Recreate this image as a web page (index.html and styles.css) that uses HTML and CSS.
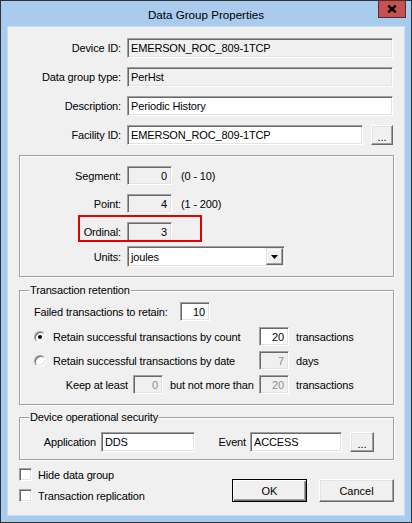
FILE: index.html
```html
<!DOCTYPE html>
<html>
<head>
<meta charset="utf-8">
<title>Data Group Properties</title>
<link rel="stylesheet" href="styles.css">
</head>
<body>
<div class="window">
  <div class="titlebar">
    <span></span>
    <span class="title">Data Group Properties</span>
    <div class="close-wrap">
      <button class="close" aria-label="Close">
        <svg width="10" height="8" viewBox="0 0 10 8"><path d="M1.2 0.6 L8.8 7.4 M8.8 0.6 L1.2 7.4" stroke="#000" stroke-width="2.4" fill="none"/></svg>
      </button>
    </div>
  </div>
  <div class="client">
    <div class="row top"><span class="lbl">Device ID:</span><div class="box ro wide">EMERSON_ROC_809-1TCP</div></div>
    <div class="row top"><span class="lbl">Data group type:</span><div class="box ro wide">PerHst</div></div>
    <div class="row top"><span class="lbl">Description:</span><div class="box wide">Periodic History</div></div>
    <div class="row top last"><span class="lbl">Facility ID:</span><div class="box facility">EMERSON_ROC_809-1TCP</div><button class="btn dots">...</button></div>

    <div class="group g1">
      <div class="row num"><span class="lbl2">Segment:</span><div class="box ro small">0</div><span class="range">(0 - 10)</span></div>
      <div class="row num"><span class="lbl2">Point:</span><div class="box ro small">4</div><span class="range">(1 - 200)</span></div>
      <div class="row num ord"><span class="lbl2">Ordinal:</span><div class="box ro small">3</div></div>
      <div class="row units"><span class="lbl2">Units:</span><div class="box combo"><span>joules</span><span class="combo-btn"><svg width="7" height="4" viewBox="0 0 7 4"><path d="M0 0 H7 L3.5 4 Z" fill="#000"/></svg></span></div></div>
      <div class="highlight"></div>
    </div>

    <div class="group g2">
      <div class="legend">Transaction retention</div>
      <div class="row r2 failed"><span class="lbl-failed">Failed transactions to retain:</span><div class="box num-box">10</div></div>
      <div class="row r2 radio-row"><span class="radio on"></span><span class="lbl-radio">Retain successful transactions by count</span><div class="box num-box">20</div><span class="unit">transactions</span></div>
      <div class="row r2 radio-row"><span class="radio"></span><span class="lbl-radio">Retain successful transactions by date</span><div class="box ro num-box dis">7</div><span class="unit">days</span></div>
      <div class="row r2 keep"><span class="lbl-keep">Keep at least</span><div class="box ro num-box dis">0</div><span class="lbl-more">but not more than</span><div class="box ro num-box dis">20</div><span class="unit">transactions</span></div>
    </div>

    <div class="group g3">
      <div class="legend">Device operational security</div>
      <div class="row sec"><span class="lbl-app">Application</span><div class="box app">DDS</div><span class="lbl-event">Event</span><div class="box event">ACCESS</div><button class="btn dots small-dots">...</button></div>
    </div>

    <div class="bottom">
      <div class="checks">
        <div class="check-row"><span class="checkbox"></span><span class="check-lbl">Hide data group</span></div>
        <div class="check-row second"><span class="checkbox"></span><span class="check-lbl">Transaction replication</span></div>
      </div>
      <div class="buttons">
        <button class="btn default">OK</button>
        <button class="btn">Cancel</button>
      </div>
    </div>
  </div>
</div>
</body>
</html>
```
FILE: styles.css
```css
* { box-sizing: border-box; }
html, body { margin: 0; padding: 0; }
body {
  width: 412px;
  height: 523px;
  overflow: hidden;
  font-family: "Liberation Sans", Arial, sans-serif;
  font-size: 11px;
  letter-spacing: -0.15px;
  color: #000;
  background: #fff;
}
.window {
  width: 412px;
  height: 523px;
  border: 1px solid #2e3136;
  background: #a9cbee;
  display: flex;
  flex-direction: column;
}
.titlebar {
  height: 25px;
  flex: none;
  display: grid;
  grid-template-columns: 1fr auto 1fr;
  align-items: center;
}
.title {
  font-family: "Liberation Sans", Arial, sans-serif;
  font-size: 11.6px;
  letter-spacing: 0;
  color: #000;
  padding-top: 1px;
}
.close-wrap {
  justify-self: end;
  align-self: start;
  margin-top: -1px;
  margin-right: 5px;
}
.close {
  width: 28px;
  height: 18px;
  padding: 0;
  background: #c75050;
  border: 1px solid #4a3030;
  display: flex;
  align-items: center;
  justify-content: center;
}
.client {
  margin: 0 6px;
  height: 490px;
  flex: none;
  border: 1px solid #c9ddf3;
  background: #f0f0f0;
  padding: 11px 10px 0 11px;
}
.row { display: flex; align-items: center; white-space: nowrap; }
.row.top { height: 20px; margin-bottom: 9px; }
.row.top.last { margin-bottom: 10px; }
.lbl { width: 102px; text-align: right; margin-right: 6px; }

.box {
  height: 100%;
  border: 1px solid;
  border-color: #a0a0a0 #fff #fff #a0a0a0;
  box-shadow: inset 1px 1px 0 #696969, inset -1px -1px 0 #e3e3e3;
  background: #fff;
  padding: 0 3px;
  display: flex;
  align-items: center;
  white-space: nowrap;
  overflow: hidden;
}
.box.ro { background: #f0f0f0; }
.box.dis { color: #8d8d8d; }
.box.wide { width: 266px; }
.box.facility { width: 236px; }

.btn {
  background: #f0f0f0;
  border: 1px solid;
  border-color: #fff #696969 #696969 #fff;
  box-shadow: inset -1px -1px 0 #a0a0a0, inset 1px 1px 0 #e3e3e3;
  font: inherit;
  color: #000;
  padding: 0;
}
.btn.dots { width: 22px; height: 20px; margin-left: 8px; padding-top: 3px; }
.btn.dots.small-dots { width: 24px; }

.group {
  position: relative;
  border: 1px solid #a0a0a0;
  box-shadow: inset 1px 1px 0 #fff, 1px 1px 0 #fff;
}
.legend {
  width: fit-content;
  margin: -7px 0 0 9px;
  padding: 0 1px;
  line-height: 13px;
  background: #f0f0f0;
}

.g1 { height: 122px; padding-top: 10px; }
.row.num { height: 19px; margin-bottom: 9px; }
.row.num.ord { margin-bottom: 5px; }
.lbl2 { width: 101px; text-align: right; margin-right: 6px; }
.box.small { width: 45px; justify-content: flex-end; padding-right: 4px; }
.range { margin-left: 9px; }
.row.units { height: 21px; }
.box.combo { width: 158px; padding: 0 1px 0 3px; justify-content: space-between; }
.combo-btn {
  width: 17px;
  height: 17px;
  background: #f0f0f0;
  border: 1px solid;
  border-color: #e3e3e3 #696969 #696969 #e3e3e3;
  box-shadow: inset -1px -1px 0 #a0a0a0, inset 1px 1px 0 #fff;
  display: flex;
  align-items: center;
  justify-content: center;
}
.highlight {
  position: absolute;
  left: 58px;
  top: 59px;
  width: 124px;
  height: 27px;
  border: 2px solid #e60000;
}

.g2 { height: 115px; margin-top: 13px; }
.row.r2 { height: 19px; padding-left: 14px; }
.row.failed { margin-top: 5px; }
.lbl-failed { width: 146px; }
.box.num-box { width: 30px; justify-content: flex-end; padding-right: 4px; }
.row.radio-row { margin-top: 6px; }
.row.radio-row + .row.radio-row { margin-top: 5px; }
.radio {
  width: 12px;
  height: 12px;
  border-radius: 50%;
  border: 1px solid;
  border-color: #a0a0a0 #fff #fff #a0a0a0;
  box-shadow: inset 1px 1px 0 #696969, inset -1px -1px 0 #e3e3e3;
  background: #fff;
  display: flex;
  align-items: center;
  justify-content: center;
  margin-right: 7px;
}
.radio.on::after {
  content: "";
  width: 4px;
  height: 4px;
  border-radius: 50%;
  background: #000;
}
.lbl-radio { width: 206px; }
.unit { margin-left: 7px; }
.row.keep { margin-top: 5px; padding-left: 0; }
.lbl-keep { width: 108px; text-align: right; margin-right: 5px; }
.lbl-more { width: 84px; margin-left: 7px; margin-right: 5px; }

.g3 { height: 43px; margin-top: 12px; }
.row.sec { height: 20px; margin-top: 8px; }
.lbl-app { width: 76px; text-align: right; margin-right: 5px; }
.box.app { width: 94px; }
.lbl-event { width: 51px; text-align: right; margin-right: 4px; }
.box.event { width: 92px; }

.bottom { display: flex; justify-content: space-between; margin-top: 8px; }
.check-row { display: flex; align-items: center; height: 13px; }
.check-row.second { margin-top: 8px; }
.checkbox {
  width: 13px;
  height: 13px;
  border: 1px solid;
  border-color: #a0a0a0 #fff #fff #a0a0a0;
  box-shadow: inset 1px 1px 0 #696969, inset -1px -1px 0 #e3e3e3;
  background: #fff;
  margin-right: 6px;
}
.buttons { display: flex; gap: 12px; margin-top: 11px; }
.buttons .btn { width: 75px; height: 23px; }
.btn.default {
  border-color: #000;
  box-shadow: inset 1px 1px 0 #fff, inset -1px -1px 0 #696969, inset -2px -2px 0 #a0a0a0;
}
```
